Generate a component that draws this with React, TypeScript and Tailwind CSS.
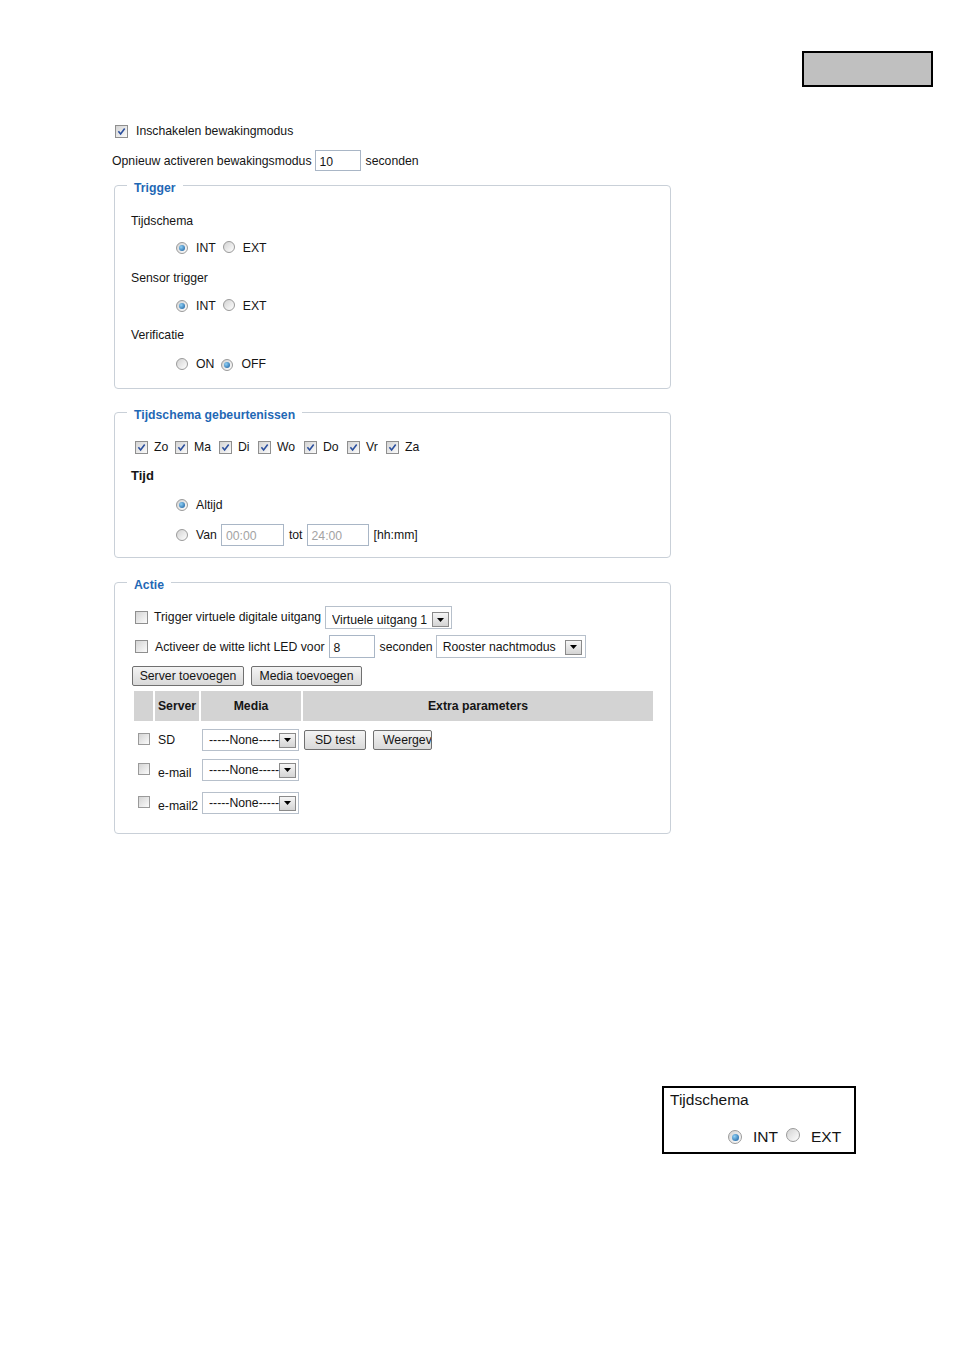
import React from "react";

// small form controls drawn the way the old IE-style camera page shows them
const Check = ({ on }: { on?: boolean }) => (
  <span className="inline-flex h-[13px] w-[13px] shrink-0 items-center justify-center border border-[#8f8f8f] bg-linear-to-br from-[#d4d4d4] to-[#fbfbfb]">
    {on && (
      <svg width="9" height="9" viewBox="0 0 9 9">
        <path d="M1.4 4.3 3.6 6.9 7.7 1.5" fill="none" stroke="#2b4f9e" strokeWidth="1.6" />
      </svg>
    )}
  </span>
);

const Radio = ({ on, big }: { on?: boolean; big?: boolean }) => (
  <span
    className={
      big
        ? "inline-flex h-[14px] w-[14px] shrink-0 items-center justify-center rounded-full border border-[#9a9a9a] bg-linear-to-br from-[#d2d2d2] to-[#ffffff]"
        : "inline-flex h-[12px] w-[12px] shrink-0 items-center justify-center rounded-full border border-[#9a9a9a] bg-linear-to-br from-[#d2d2d2] to-[#ffffff]"
    }
  >
    {on && (
      <span
        className={
          big
            ? "h-[7px] w-[7px] rounded-full bg-[radial-gradient(circle_at_35%_35%,#8fd0f5,#12579a)]"
            : "h-[6px] w-[6px] rounded-full bg-[radial-gradient(circle_at_35%_35%,#8fd0f5,#12579a)]"
        }
      />
    )}
  </span>
);

const Arrow = () => (
  <span className="flex h-[15px] w-[17px] shrink-0 items-center justify-center border border-[#8a8a8a] bg-linear-to-b from-[#f6f6f6] to-[#d4d4d4]">
    <svg width="7" height="4" viewBox="0 0 7 4">
      <path d="M0 0h7L3.5 4z" fill="#000" />
    </svg>
  </span>
);

const Select = ({ text, className }: { text: string; className: string }) => (
  <span className={"flex shrink-0 items-center justify-between border border-[#b7c0cb] bg-white pr-[2px] " + className}>
    <span className="overflow-hidden whitespace-nowrap">{text}</span>
    <Arrow />
  </span>
);

const Btn = ({ children, className }: { children: React.ReactNode; className: string }) => (
  <span
    className={
      "flex h-[20px] shrink-0 items-center justify-center overflow-hidden whitespace-nowrap rounded-[2px] border border-[#707070] bg-linear-to-b from-[#f4f4f4] to-[#d9d9d9] " +
      className
    }
  >
    {children}
  </span>
);

const Box = ({ children, className }: { children?: React.ReactNode; className: string }) => (
  <span className={"flex shrink-0 items-center border border-[#a9b6c6] bg-white pl-[4px] " + className}>
    {children}
  </span>
);

const Legend = ({ children }: { children: React.ReactNode }) => (
  <legend className="px-[7px] text-[12.25px] font-bold leading-[14px] text-[#1f68b5]">
    <span className="relative top-[3px]">{children}</span>
  </legend>
);

const days = [
  { d: "Zo", w: "w-[40px]" },
  { d: "Ma", w: "w-[44px]" },
  { d: "Di", w: "w-[39px]" },
  { d: "Wo", w: "w-[46px]" },
  { d: "Do", w: "w-[43px]" },
  { d: "Vr", w: "w-[39px]" },
  { d: "Za", w: "w-[40px]" },
];

const rows = [
  { name: "SD", mt: "mt-[8px]", top: true },
  { name: "e-mail", mt: "mt-[8px]", top: false },
  { name: "e-mail2", mt: "mt-[11px]", top: false },
];

const RadioPair = ({ a, b, first }: { a: string; b: string; first: boolean }) => (
  <div className="ml-[49px] flex h-[20px] items-center">
    <Radio on={first} />
    <span className="ml-[8px]">{a}</span>
    <span className="ml-[7px]">
      <Radio on={!first} />
    </span>
    <span className="ml-[8px]">{b}</span>
  </div>
);

export default function App() {
  return (
    <div className="min-h-[1350px] w-[954px] bg-white font-['Liberation_Sans',Arial,sans-serif] text-[12.25px] leading-[14px] text-[#151515]">
      {/* grey placeholder box top right */}
      <div className="flex justify-end pr-[21px] pt-[51px]">
        <div className="h-[36px] w-[131px] border-2 border-black bg-[#c0c0c0]" />
      </div>

      <div className="ml-[112px] w-[560px]">
        <div className="mt-[34px] flex h-[20px] items-center pl-[3px]">
          <Check on />
          <span className="ml-[8px]">Inschakelen bewakingmodus</span>
        </div>
        <div className="mt-[9px] flex h-[21px] items-center">
          <span>Opnieuw activeren bewakingsmodus</span>
          <Box className="ml-[3px] h-[21px] w-[46px] pt-[2px]">10</Box>
          <span className="ml-[5px]">seconden</span>
        </div>

        {/* Trigger */}
        <fieldset className="ml-[2px] mt-[7px] w-[557px] rounded-[4px] border border-[#c9d0d8] pb-[14px] pl-[12px]">
          <Legend>Trigger</Legend>
          <div className="ml-[4px] mt-[18px] flex h-[20px] items-center pt-[1px]">Tijdschema</div>
          <div className="mt-[8px]">
            <RadioPair a="INT" b="EXT" first />
          </div>
          <div className="ml-[4px] mt-[10px] flex h-[20px] items-center">Sensor trigger</div>
          <div className="mt-[8px]">
            <RadioPair a="INT" b="EXT" first />
          </div>
          <div className="ml-[4px] mt-[9px] flex h-[20px] items-center">Verificatie</div>
          <div className="mt-[9px]">
            <RadioPair a="ON" b="OFF" first={false} />
          </div>
        </fieldset>

        {/* Tijdschema gebeurtenissen */}
        <fieldset className="ml-[2px] mt-[16px] w-[557px] rounded-[4px] border border-[#c9d0d8] pb-[11px] pl-[12px]">
          <Legend>Tijdschema gebeurtenissen</Legend>
          <div className="ml-[8px] mt-[18px] flex h-[20px] items-center">
            {days.map((x) => (
              <div key={x.d} className={"flex items-center " + x.w}>
                <Check on />
                <span className="ml-[6px]">{x.d}</span>
              </div>
            ))}
          </div>
          <div className="ml-[4px] mt-[9px] flex h-[20px] items-center text-[13px] font-bold">Tijd</div>
          <div className="ml-[49px] mt-[9px] flex h-[20px] items-center">
            <Radio on />
            <span className="ml-[8px]">Altijd</span>
          </div>
          <div className="ml-[49px] mt-[9px] flex h-[22px] items-center">
            <Radio />
            <span className="ml-[8px]">Van</span>
            <Box className="ml-[4px] h-[22px] w-[63px] pt-[2px] text-[#a3a3a3]">00:00</Box>
            <span className="ml-[5px]">tot</span>
            <Box className="ml-[4px] h-[22px] w-[62px] pt-[2px] text-[#a3a3a3]">24:00</Box>
            <span className="ml-[5px]">[hh:mm]</span>
          </div>
        </fieldset>

        {/* Actie */}
        <fieldset className="ml-[2px] mt-[17px] w-[557px] rounded-[4px] border border-[#c9d0d8] pb-[19px] pl-[12px]">
          <Legend>Actie</Legend>
          <div className="ml-[8px] mt-[17px] flex h-[23px] items-center">
            <Check />
            <span className="-mt-[2px] ml-[6px]">Trigger virtuele digitale uitgang</span>
            <Select text="Virtuele uitgang 1" className="ml-[4px] h-[23px] w-[127px] pl-[6px] pt-[4px] leading-[16px]" />
          </div>
          <div className="ml-[8px] mt-[6px] flex h-[23px] items-center">
            <Check />
            <span className="ml-[7px]">Activeer de witte licht LED voor</span>
            <Box className="ml-[4px] h-[23px] w-[46px] pt-[3px]">8</Box>
            <span className="ml-[5px]">seconden</span>
            <Select text="Rooster nachtmodus" className="ml-[3px] h-[23px] w-[150px] pl-[6px] pr-[3px] pt-[1px]" />
          </div>
          <div className="ml-[5px] mt-[8px] flex h-[20px] items-center">
            <Btn className="w-[112px]">Server toevoegen</Btn>
            <Btn className="ml-[7px] w-[111px]">Media toevoegen</Btn>
          </div>

          <div className="ml-[7px] mt-[5px] grid h-[30px] grid-cols-[19px_44px_100px_350px] gap-x-[2px] font-bold">
            <div className="bg-[#d3d3d3]" />
            <div className="flex items-center justify-center bg-[#d3d3d3]">Server</div>
            <div className="flex items-center justify-center bg-[#d3d3d3]">Media</div>
            <div className="flex items-center justify-center bg-[#d3d3d3]">Extra parameters</div>
          </div>

          {rows.map((r) => (
            <div key={r.name} className={"ml-[7px] grid h-[22px] grid-cols-[19px_44px_100px_350px] gap-x-[2px] " + r.mt}>
              <div className="pl-[4px] pt-[4px]">
                <span className="flex h-[12px] w-[12px] border border-[#9a9a9a] bg-linear-to-br from-[#d4d4d4] to-[#fbfbfb]" />
              </div>
              <div className={r.top ? "flex items-center pl-[3px]" : "flex items-end whitespace-nowrap pb-[1px] pl-[3px]"}>
                {r.name}
              </div>
              <div className="pl-[1px]">
                <Select text="-----None-----" className="h-[22px] w-[97px] pl-[6px]" />
              </div>
              <div className="flex items-center pl-[1px]">
                {r.top && (
                  <>
                    <Btn className="w-[62px]">SD test</Btn>
                    <Btn className="ml-[7px] w-[59px] justify-start pl-[9px]">Weergev</Btn>
                  </>
                )}
              </div>
            </div>
          ))}
        </fieldset>
      </div>

      {/* enlarged detail of the Tijdschema setting */}
      <div className="ml-[662px] mt-[252px] h-[68px] w-[194px] border-2 border-black pl-[6px] pt-[3px] text-[15.5px] leading-[18px]">
        <div>Tijdschema</div>
        <div className="mt-[18px] flex h-[20px] items-center pl-[58px]">
          <Radio on big />
          <span className="ml-[11px]">INT</span>
          <span className="ml-[8px]">
            <Radio big />
          </span>
          <span className="ml-[11px]">EXT</span>
        </div>
      </div>
    </div>
  );
}
